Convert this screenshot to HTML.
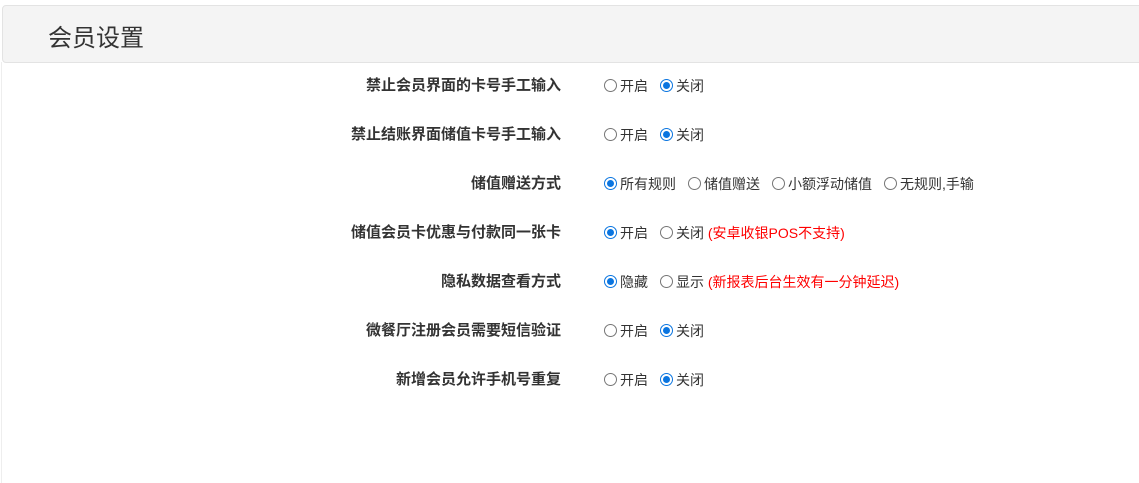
<!DOCTYPE html>
<html><head><meta charset="utf-8"><style>
body{margin:0;width:1139px;height:483px;background:#fff;font-family:"Liberation Sans","Noto Sans CJK SC",sans-serif;position:relative;overflow:hidden}
.hd{position:absolute;left:2px;top:5px;width:1140px;height:56px;background:#f4f4f4;border:1px solid #e3e3e3;border-radius:4px}
.hd span{position:absolute;left:45px;top:18px;font-size:24px;color:#333;line-height:30px}
.lb{position:absolute;right:578px;font-size:15px;font-weight:bold;color:#333;line-height:16px;white-space:nowrap}
.op{position:absolute;left:604px;font-size:14px;color:#333;line-height:16px;white-space:nowrap}
.r{display:inline-block;width:11px;height:11px;border:1px solid #767676;border-radius:50%;vertical-align:-1px;margin-right:3px;box-sizing:content-box;position:relative}
.r.c{border-color:#0a75e0;}
.r.c::after{content:"";position:absolute;left:2px;top:2px;width:7px;height:7px;border-radius:50%;background:#0a75e0}
.g{display:inline-block;width:12px}
.red{color:#f00}
.lline{position:absolute;left:1px;top:62px;width:1px;height:421px;background:#eee}
</style></head><body>
<div class="hd"><span>会员设置</span></div>
<div class="lline"></div>
<div class="lb" style="top:78px">禁止会员界面的卡号手工输入</div>
<div class="op" style="top:78px"><span class="r"></span>开启<span class="g"></span><span class="r c"></span>关闭</div>
<div class="lb" style="top:127px">禁止结账界面储值卡号手工输入</div>
<div class="op" style="top:127px"><span class="r"></span>开启<span class="g"></span><span class="r c"></span>关闭</div>
<div class="lb" style="top:176px">储值赠送方式</div>
<div class="op" style="top:176px"><span class="r c"></span>所有规则<span class="g"></span><span class="r"></span>储值赠送<span class="g"></span><span class="r"></span>小额浮动储值<span class="g"></span><span class="r"></span>无规则,手输</div>
<div class="lb" style="top:225px">储值会员卡优惠与付款同一张卡</div>
<div class="op" style="top:225px"><span class="r c"></span>开启<span class="g"></span><span class="r"></span>关闭 <span class="red">(安卓收银POS不支持)</span></div>
<div class="lb" style="top:274px">隐私数据查看方式</div>
<div class="op" style="top:274px"><span class="r c"></span>隐藏<span class="g"></span><span class="r"></span>显示 <span class="red">(新报表后台生效有一分钟延迟)</span></div>
<div class="lb" style="top:323px">微餐厅注册会员需要短信验证</div>
<div class="op" style="top:323px"><span class="r"></span>开启<span class="g"></span><span class="r c"></span>关闭</div>
<div class="lb" style="top:372px">新增会员允许手机号重复</div>
<div class="op" style="top:372px"><span class="r"></span>开启<span class="g"></span><span class="r c"></span>关闭</div>
</body></html>
